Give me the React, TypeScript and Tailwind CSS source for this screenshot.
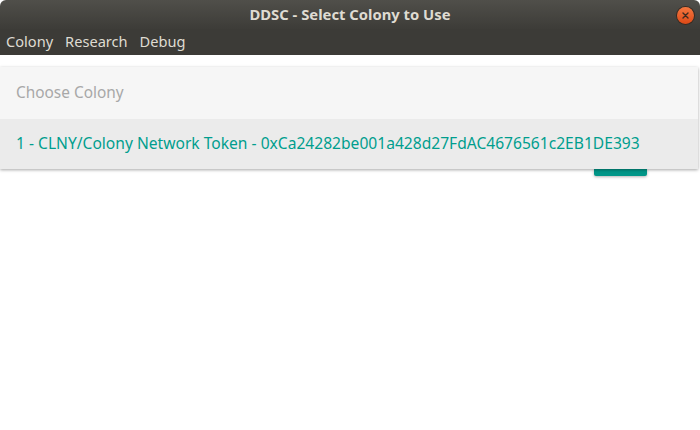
export default function App() {
  const font = { fontFamily: '"Noto Sans", "Open Sans", sans-serif' };
  return (
    <div className="flex h-[430px] w-[700px] flex-col overflow-hidden bg-white" style={font}>
      <div className="relative flex h-[29px] items-center justify-center rounded-t-[6px] bg-gradient-to-b from-[#504f4a] to-[#3d3c38]">
        <span className="text-[14.8px] font-bold text-[#dfdbd2]">DDSC - Select Colony to Use</span>
        <div className="absolute right-[6px] top-[7px] flex h-[17px] w-[17px] items-center justify-center rounded-full bg-gradient-to-b from-[#f4773f] to-[#dd4814] shadow-[0_0_0_1px_#3a2a20]">
          <svg width="7" height="7" viewBox="0 0 7 7" stroke="#3c2a20" strokeWidth="1.4" strokeLinecap="round">
            <path d="M1 1 L6 6 M6 1 L1 6" />
          </svg>
        </div>
      </div>
      <div className="flex h-[26px] items-center gap-[12px] bg-[#3c3b37] px-[6px] text-[14.6px] text-[#dfdbd2]">
        <span>Colony</span>
        <span>Research</span>
        <span>Debug</span>
      </div>
      <div className="relative mt-[12px]">
        <div className="relative z-10 mr-[2px] bg-[#f6f6f6] shadow-[0_1px_3px_rgba(0,0,0,0.35)]">
          <div className="flex h-[52px] items-center px-[16px] text-[15.4px] text-[#a8a8a8]">Choose Colony</div>
          <div className="flex h-[50px] items-center bg-[#ebebeb] px-[16px] text-[15.6px] text-[#009e8e]">
            1 - CLNY/Colony Network Token - 0xCa24282be001a428d27FdAC4676561c2EB1DE393
          </div>
        </div>
        <div className="ml-[594px] h-[7px] w-[53px] rounded-b-[2px] bg-[#009688] shadow-[0_1px_3px_rgba(0,0,0,0.3)]" />
      </div>
    </div>
  );
}
